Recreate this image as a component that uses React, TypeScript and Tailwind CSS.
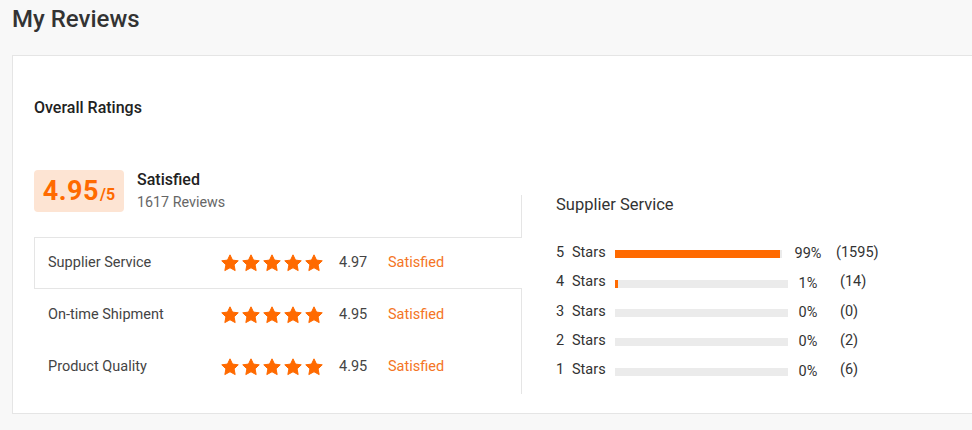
import React from "react";

const ORANGE = "#ff6a00";

function Star() {
  return (
    <svg width="20" height="20" viewBox="0 0 24 24" className="shrink-0">
      <path
        d="M12 2.2l3 6.3 6.9.9-5 4.8 1.3 6.9L12 17.7l-6.2 3.4 1.3-6.9-5-4.8 6.9-.9z"
        fill={ORANGE}
        stroke={ORANGE}
        strokeWidth="1.2"
        strokeLinejoin="round"
      />
    </svg>
  );
}

const rows = [
  { label: "Supplier Service", score: "4.97", active: true },
  { label: "On-time Shipment", score: "4.95", active: false },
  { label: "Product Quality", score: "4.95", active: false },
];

const dist = [
  { n: 5, pct: 99, text: "99%", count: "(1595)", trackW: 167, countMl: "ml-[8px]" },
  { n: 4, pct: 1, text: "1%", count: "(14)", trackW: 173, countMl: "ml-[12px]" },
  { n: 3, pct: 0, text: "0%", count: "(0)", trackW: 173, countMl: "ml-[12px]" },
  { n: 2, pct: 0, text: "0%", count: "(2)", trackW: 173, countMl: "ml-[12px]" },
  { n: 1, pct: 0, text: "0%", count: "(6)", trackW: 173, countMl: "ml-[12px]" },
];

export default function App() {
  return (
    <div className="w-[972px] h-[430px] overflow-hidden bg-[#f8f8f8] font-['Roboto',sans-serif] text-[#333]">
      <h1 className="pl-3 h-[55px] text-[24px] font-medium leading-[39px] text-[#333]">My Reviews</h1>
      <div className="ml-3 w-[1000px] h-[359px] bg-white border border-[#e5e5e5] pl-[21px] pt-[42px]">
        <div className="h-[20px] text-[16px] font-medium leading-[20px] text-[#222]">Overall Ratings</div>
        <div className="flex mt-[77px]">
          {/* left */}
          <div className="w-[488px] h-[199px] border-r border-[#e5e5e5]">
            <div className="-mt-[25px] flex items-center h-[42px]">
              <div className="h-[42px] w-[90px] rounded-[4px] bg-[#fde4d3] flex items-baseline justify-center pt-[4px]">
                <span className="text-[27px] font-bold leading-[34px] tracking-[0.5px]" style={{ color: ORANGE }}>4.95</span>
                <span className="text-[16px] font-bold ml-[1px]" style={{ color: ORANGE }}>/5</span>
              </div>
              <div className="ml-[13px] flex flex-col">
                <span className="text-[16px] font-medium leading-[20px] text-[#222]">Satisfied</span>
                <span className="text-[14.3px] leading-[20px] text-[#666] mt-[2px]">1617 Reviews</span>
              </div>
            </div>
            <div className="mt-[25px] flex flex-col">
              {rows.map((r) => (
                <div
                  key={r.label}
                  className={
                    "flex items-center h-[52px] pl-[13px] " +
                    (r.active
                      ? "border border-r-0 border-[#e5e5e5] bg-white -mr-px w-[488px]"
                      : "border border-transparent")
                  }
                >
                  <span className="w-[172px] text-[14.5px] text-[#444]">{r.label}</span>
                  <span className="flex gap-[1px]">
                    <Star />
                    <Star />
                    <Star />
                    <Star />
                    <Star />
                  </span>
                  <span className="ml-[15px] w-[49px] text-[14.5px] text-[#444]">{r.score}</span>
                  <span className="text-[14.5px]" style={{ color: "#f47524" }}>Satisfied</span>
                </div>
              ))}
            </div>
          </div>
          {/* right */}
          <div className="pl-[34px] -mt-[1px]">
            <div className="text-[16.5px] leading-[22px] text-[#333]">Supplier Service</div>
            <div className="mt-[22px] flex flex-col">
              {dist.map((d) => (
                <div key={d.n} className="flex items-center h-[29.4px] text-[14.5px] text-[#333]">
                  <span className="w-[16px]">{d.n}</span>
                  <span className="w-[43px]">Stars</span>
                  <span className="w-[173px] flex items-center mt-[3px]">
                    <span className="h-[8px] bg-[#ebebeb] block" style={{ width: d.trackW }}>
                      <span
                        className="h-[8px] block"
                        style={{ width: `${(d.pct / 100) * d.trackW}px`, minWidth: d.pct > 0 ? 3 : 0, background: ORANGE }}
                      />
                    </span>
                  </span>
                  <span className="w-[40px] text-center mt-[3px]">{d.text}</span>
                  <span className={d.countMl}>{d.count}</span>
                </div>
              ))}
            </div>
          </div>
        </div>
      </div>
    </div>
  );
}
